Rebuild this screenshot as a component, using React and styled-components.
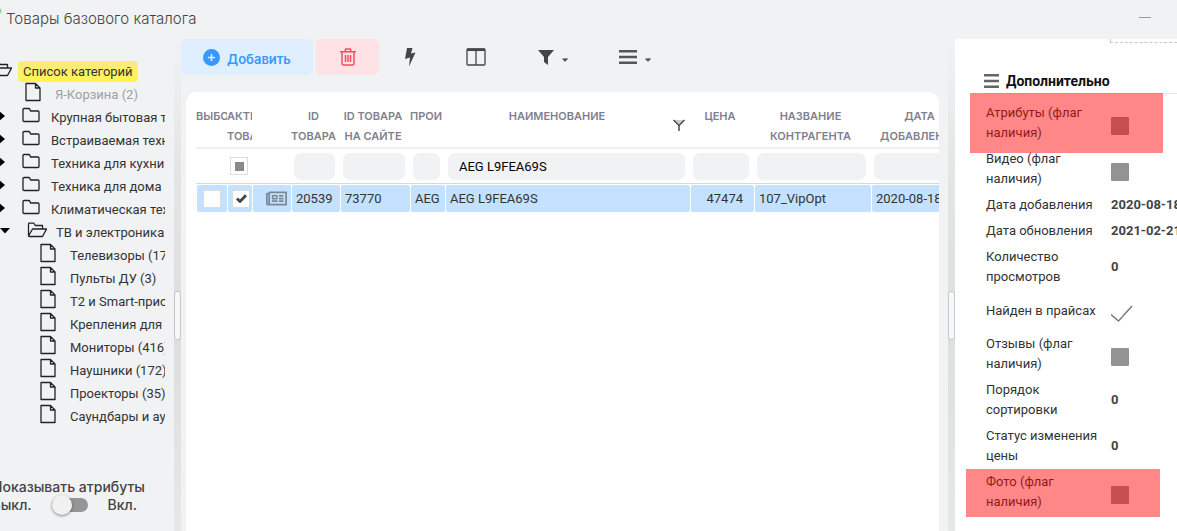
import React, { useEffect, useRef, useState } from 'react'
import styled, { createGlobalStyle } from 'styled-components'
import { FaCirclePlus, FaCaretDown } from 'react-icons/fa6'
import { FaRegNewspaper } from 'react-icons/fa'

const narrow = `Roboto, sans-serif`;
const wide = `Inter, sans-serif`;

const GlobalStyle = createGlobalStyle`
  * {
    box-sizing: border-box;
  }
  body {
    margin: 0;
    background: #f1f2f4;
    color: #333;
    font-family: ${narrow};
    font-size: 13px;
    overflow: hidden;
  }
  button, input {
    font: inherit;
  }
`;

const Window = styled.div`
  display: flex;
  flex-direction: column;
  height: 100vh;
`;

const TitleBar = styled.header`
  display: flex;
  justify-content: space-between;
  align-items: center;
  flex: none;
  height: 39px;
  padding: 0 26px 4px 6px;
  background: radial-gradient(circle at -2px 11px, #6abf3a 2px, transparent 4px);
  h1 {
    margin: 2px 0 0;
    font-family: ${wide};
    font-size: 15px;
    font-weight: 300;
    color: #444;
  }
`;

const MinimizeButton = styled.button`
  width: 12px;
  height: 12px;
  padding: 0;
  border: none;
  background: linear-gradient(#999, #999) center / 12px 1px no-repeat;
  cursor: pointer;
`;

const Body = styled.div`
  display: flex;
  flex: 1;
  min-height: 0;
`;

const Sidebar = styled.aside`
  display: flex;
  flex-direction: column;
  flex: none;
  width: 174px;
  padding-top: 21px;
  overflow: hidden;
`;

const Tree = styled.ul`
  list-style: none;
  width: 165px;
  margin: 0;
  padding: 0;
  overflow: hidden;
`;

const TreeRow = styled.li`
  display: flex;
  align-items: center;
  height: 23px;
  white-space: nowrap;
  color: ${(props) => (props.$muted ? "#a0a0a0" : "#333")};
`;

const TreeArrow = styled.svg`
  flex: none;
  width: 10px;
  height: 12px;
  margin: 0 17px 4px ${(props) => (props.$open ? 0 : -5)}px;
`;

const TreeIcon = styled.svg`
  flex: none;
  width: 20px;
  height: 20px;
  margin: 0 ${(props) => props.$gap}px 6px ${(props) => props.$indent}px;
  fill: none;
  stroke: #222;
  stroke-width: 1.3;
  stroke-linejoin: round;
`;

const RootLabel = styled.span`
  height: 21px;
  padding: 0 5px;
  border-radius: 4px;
  background: linear-gradient(#fbe983, #fff64d);
  line-height: 21px;
`;

const AttributeSwitch = styled.div`
  display: flex;
  flex-direction: column;
  align-items: flex-end;
  width: 145px;
  margin-top: 50px;
  font-family: ${wide};
  font-size: 14px;
  font-weight: 500;
  line-height: 18px;
  white-space: nowrap;
  color: #444;
`;

const SwitchRow = styled.label`
  display: flex;
  align-items: center;
  justify-content: flex-end;
  padding-right: 8px;
`;

const Switch = styled.input`
  appearance: none;
  display: flex;
  align-items: center;
  width: 36px;
  height: 14px;
  margin: 0 20px;
  border-radius: 7px;
  background: #959595;
  cursor: pointer;
  &::before {
    content: "";
    width: 20px;
    height: 20px;
    border-radius: 50%;
    background: #f1f1f1;
    box-shadow: 0 1px 3px rgba(0, 0, 0, 0.45);
  }
  &:checked {
    justify-content: flex-end;
  }
`;

const Splitter = styled.div`
  flex: none;
  width: 7px;
  padding-top: 252px;
  background: linear-gradient(#f1f2f4, #e4e6e6 25%, #dddfdf 60%, #e6e8e7);
  cursor: col-resize;
  &::before {
    content: "";
    display: block;
    height: 47px;
    border: 1px solid #c4c6c8;
    border-radius: 3px;
    background: #f6f7f8;
  }
`;

const Main = styled.main`
  display: flex;
  flex-direction: column;
  flex: 1;
  min-width: 0;
`;

const Toolbar = styled.div`
  display: flex;
  gap: 3px;
  height: 36px;
  margin-bottom: 17px;
`;

const ToolButton = styled.button`
  display: flex;
  align-items: center;
  justify-content: center;
  gap: 7px;
  width: ${(props) => props.$width}px;
  padding: 0;
  border: none;
  border-radius: 5px;
  background: ${(props) => props.$background || "transparent"};
  color: ${(props) => props.$color || "#444"};
  font-family: ${wide};
  font-size: 13px;
  font-weight: 600;
  cursor: pointer;
  span {
    padding-top: 4px;
  }
`;

const Caret = styled(FaCaretDown)`
  margin-top: 4px;
  width: 8px;
  height: 9px;
  color: #555;
`;

const GridPanel = styled.section`
  flex: 1;
  margin: 0 9px 0 5px;
  padding: 14px 0 0 10px;
  border-radius: 10px 10px 0 0;
  background: #fff;
  overflow: hidden;
`;

const Table = styled.table`
  width: 776px;
  table-layout: fixed;
  border-collapse: separate;
  border-spacing: 0;
`;

const HeadCell = styled.th`
  height: 43px;
  padding: 0 ${(props) => (props.$align ? 0 : 4)}px 0 0;
  border-bottom: 2px solid #efefef;
  vertical-align: top;
  text-align: ${(props) => props.$align || "center"};
  font-family: ${wide};
  font-size: 11px;
  font-weight: 600;
  line-height: 20px;
  color: #7f7f8d;
  white-space: nowrap;
  overflow: hidden;
`;

const HeadWithFilter = styled.div`
  display: flex;
  span {
    flex: 1;
  }
  svg {
    margin: 13px 1px 0 4px;
  }
`;

const FilterCell = styled.td`
  height: 35px;
  padding: 0 5px 0 3px;
  border-bottom: 1px solid #d8d8d8;
`;

const FilterInput = styled.input`
  display: block;
  width: 100%;
  height: 27px;
  padding: 0 11px;
  border: none;
  border-radius: 7px;
  background: #f1f2f3;
  color: #000;
  outline: none;
`;

const Cell = styled.td`
  height: 29px;
  padding: 0 ${(props) => (props.$number ? 11 : 4)}px 0 4px;
  border: solid transparent;
  border-width: 1px 0 1px 1px;
  border-radius: 3px;
  background: #c4e1ff;
  background-clip: padding-box;
  text-align: ${(props) => props.$align || "left"};
  white-space: nowrap;
  overflow: hidden;
`;

const NewsIcon = styled(FaRegNewspaper)`
  display: inline-block;
  vertical-align: middle;
  color: #7d8896;
`;

const Tick = styled.span`
  display: grid;
  width: 18px;
  height: 18px;
  margin: 0 auto;
  border: 1px solid #dcdcdc;
  background: #fff;
  input, svg {
    grid-area: 1 / 1;
    place-self: center;
    margin: 0;
  }
  input {
    appearance: none;
    width: 16px;
    height: 16px;
  }
  input:indeterminate {
    width: 9px;
    height: 9px;
    background: #8a8a8a;
  }
  svg {
    pointer-events: none;
  }
`;

const Details = styled.aside`
  flex: none;
  width: 222px;
  background: #fff;
  overflow: hidden;
`;

const PhotoFrame = styled.div`
  height: 4px;
  margin-left: 155px;
  border: dashed #c8c8c8;
  border-width: 0 0 1px 1px;
`;

const DetailsTitle = styled.h2`
  display: flex;
  align-items: center;
  gap: 7px;
  height: 26px;
  margin: 25px 0 6px 29px;
  border-bottom: 1px solid #e8e8e8;
  font-size: 14px;
  font-weight: 700;
  color: #111;
`;

const Field = styled.div`
  position: relative;
  display: grid;
  grid-template-columns: 113px 1fr;
  column-gap: 12px;
  align-items: center;
  min-height: ${(props) => (props.$tall ? 41 : 26)}px;
  padding: 3px 0 3px 31px;
  line-height: 20px;
  white-space: nowrap;
  label {
    white-space: pre-line;
  }
  output {
    font-weight: 700;
    color: #444;
  }
  svg {
    margin-top: 6px;
  }
`;

const FlagBox = styled.input`
  appearance: none;
  width: 18px;
  height: 18px;
  margin: 6px 0 0;
  border-radius: 1px;
  background: #939393;
`;

const Marker = styled.div`
  position: absolute;
  z-index: 1;
  inset: ${(props) => props.$inset};
  background: rgba(255, 0, 0, 0.47);
  pointer-events: none;
`;

const folderPath = "M2 15.5V4.5q0-1 1-1h4.500q1 0 1.500 1l.5 1.500h7.500q1 0 1 1v8.500q0 1-1 1H3q-1 0-1-1z";
const openFolderPath = "M1.500 16V4q0-.8.8-.8h4.400l1.600 2.300h7.200v3.500M1.500 16l4-7h14l-4 7.500h-13q-1 0-1-.5zM5.500 9h10";
const filePath = "M3 1.500h9.500l4.500 4.500v12.500H3zM12.500 1.500v4.500H17";

const tree = [
  { type: "file", text: "Я-Корзина (2)", indent: 23, muted: true },
  { type: "folder", text: "Крупная бытовая техника" },
  { type: "folder", text: "Встраиваемая техника" },
  { type: "folder", text: "Техника для кухни" },
  { type: "folder", text: "Техника для дома" },
  { type: "folder", text: "Климатическая техника" },
  { type: "open", text: "ТВ и электроника" },
  { type: "file", text: "Телевизоры (174)" },
  { type: "file", text: "Пульты ДУ (3)" },
  { type: "file", text: "Т2 и Smart-приставки" },
  { type: "file", text: "Крепления для ТВ" },
  { type: "file", text: "Мониторы (416)" },
  { type: "file", text: "Наушники (172)" },
  { type: "file", text: "Проекторы (35)" },
  { type: "file", text: "Саундбары и аудио" },
];

const fields = [
  { label: "Атрибуты (флаг\nналичия)", flag: true, marker: "-7px 14px -7px 15px" },
  { label: "Видео (флаг\nналичия)", flag: true },
  { label: "Дата добавления", value: "2020-08-18" },
  { label: "Дата обновления", value: "2021-02-21" },
  { label: "Количество\nпросмотров", value: "0" },
  { label: "Найден в прайсах", found: true },
  { label: "Отзывы (флаг\nналичия)", flag: true },
  { label: "Порядок\nсортировки", value: "0" },
  { label: "Статус изменения\nцены", value: "0" },
  { label: "Фото (флаг\nналичия)", flag: true, marker: "0 17px -2px 11px" },
];

const columnWidths = [31, 25, 39, 49, 70, 35, 245, 64, 117, 101];

function TreeItem({ item }) {
  if (item.type === "file") {
    return (
      <TreeRow $muted={item.muted}>
        <TreeIcon $indent={item.indent || 38} $gap={12} viewBox="0 0 20 20">
          <path d={filePath} />
        </TreeIcon>
        {item.text}
      </TreeRow>
    );
  }
  const open = item.type === "open";
  return (
    <TreeRow>
      <TreeArrow $open={open} viewBox="0 0 10 12">
        <path d={open ? "M0 3h10L5 8.500z" : "M3 0l7 6-7 6z"} />
      </TreeArrow>
      <TreeIcon $indent={open ? 0 : -1} $gap={open ? 9 : 10} viewBox="0 0 20 20">
        <path d={open ? openFolderPath : folderPath} />
      </TreeIcon>
      {item.text}
    </TreeRow>
  );
}

function TickBox({ label, value, onChange }) {
  const ref = useRef(null);
  useEffect(() => {
    ref.current.indeterminate = value === null;
  }, [value]);
  return (
    <Tick>
      <input
        ref={ref}
        type="checkbox"
        aria-label={label}
        checked={!!value}
        onChange={(e) => onChange(e.target.checked)}
      />
      {value && (
        <svg width="11" height="9" viewBox="0 0 11 9" fill="none" stroke="#444" strokeWidth="2.800">
          <path d="M1 4.500l3 3L10 1.200" />
        </svg>
      )}
    </Tick>
  );
}

function MenuIcon({ width, color }) {
  return (
    <svg width={width} height="14" viewBox="0 0 18 14" preserveAspectRatio="none" fill={color}>
      <path d="M0 0h18v2.500H0zM0 5.750h18v2.500H0zM0 11.500h18V14H0z" />
    </svg>
  );
}

export default function App() {
  const [name, setName] = useState("AEG L9FEA69S");
  const [selected, setSelected] = useState(false);
  const [active, setActive] = useState(true);
  const [activeFilter, setActiveFilter] = useState(null);
  const [showAttributes, setShowAttributes] = useState(false);

  return (
    <Window>
      <GlobalStyle />
      <TitleBar>
        <h1>Товары базового каталога</h1>
        <MinimizeButton aria-label="Свернуть" />
      </TitleBar>
      <Body>
        <Sidebar>
          <Tree>
            <TreeRow>
              <TreeIcon $indent={-8} $gap={6} viewBox="0 0 20 20">
                <path d={openFolderPath} />
              </TreeIcon>
              <RootLabel>Список категорий</RootLabel>
            </TreeRow>
            {tree.map((item) => (
              <TreeItem key={item.text} item={item} />
            ))}
          </Tree>
          <AttributeSwitch>
            <span>Показывать атрибуты</span>
            <SwitchRow>
              Выкл.
              <Switch
                type="checkbox"
                role="switch"
                checked={showAttributes}
                onChange={(e) => setShowAttributes(e.target.checked)}
              />
              Вкл.
            </SwitchRow>
          </AttributeSwitch>
        </Sidebar>
        <Splitter />
        <Main>
          <Toolbar>
            <ToolButton $width={132} $background="#e0efff" $color="#3699ff">
              <FaCirclePlus size={17} />
              <span>Добавить</span>
            </ToolButton>
            <ToolButton $width={63} $background="#ffe2e5" $color="#f64e60" aria-label="Удалить">
              <svg width="16" height="18" viewBox="0 0 16 18" fill="none" stroke="currentColor" strokeWidth="1.500">
                <path d="M0 3.750h16M2 4v11.500q0 1.500 1.500 1.500h9q1.500 0 1.500-1.500V4M5 3.500l.7-2.500h4.600l.7 2.500M5.500 7v7M8 7v7M10.500 7v7" />
              </svg>
            </ToolButton>
            <ToolButton $width={56} aria-label="Быстрые действия">
              <svg width="12" height="20" viewBox="0 0 12 20" fill="currentColor">
                <path d="M3 1h5.500L7 6.500 11.500 5.500 5 19.500 6 10.500 1 12z" />
              </svg>
            </ToolButton>
            <ToolButton $width={70} aria-label="Колонки">
              <svg width="20" height="18" viewBox="0 0 20 18" fill="none" stroke="currentColor" strokeWidth="1.300">
                <rect x="1" y="1" width="18" height="16" rx="1" />
                <path d="M1 1.800h18" strokeWidth="2.500" />
                <path d="M10 2v15" />
              </svg>
            </ToolButton>
            <ToolButton $width={78} aria-label="Фильтр">
              <svg width="16" height="16" viewBox="0 0 16 16" fill="currentColor">
                <path d="M0 1h16L10 8v8l-4-3V8z" />
              </svg>
              <Caret />
            </ToolButton>
            <ToolButton $width={80} aria-label="Меню">
              <MenuIcon width="18" color="#555" />
              <Caret />
            </ToolButton>
          </Toolbar>
          <GridPanel>
            <Table>
              <colgroup>
                {columnWidths.map((width, i) => (
                  <col key={i} width={width} />
                ))}
              </colgroup>
              <thead>
                <tr>
                  <HeadCell $align="left">ВЫБОР</HeadCell>
                  <HeadCell $align="left">АКТИВНЫЙ<br />ТОВАР</HeadCell>
                  <HeadCell />
                  <HeadCell>ID<br />ТОВАРА</HeadCell>
                  <HeadCell>ID ТОВАРА<br />НА САЙТЕ</HeadCell>
                  <HeadCell $align="left">ПРОИ</HeadCell>
                  <HeadCell>
                    <HeadWithFilter>
                      <span>НАИМЕНОВАНИЕ</span>
                      <svg width="12" height="12" viewBox="0 0 12 12" fill="none" stroke="#444" strokeWidth="1.300">
                        <path d="M.5 1h11L7 6v5.500H5V6z" fill="#ccc" stroke="none" />
                        <path d="M.5 1L6 6.500V12M11.500 1L6 6.500" />
                      </svg>
                    </HeadWithFilter>
                  </HeadCell>
                  <HeadCell>ЦЕНА</HeadCell>
                  <HeadCell>НАЗВАНИЕ<br />КОНТРАГЕНТА</HeadCell>
                  <HeadCell>ДАТА<br />ДОБАВЛЕНИЯ</HeadCell>
                </tr>
              </thead>
              <tbody>
                <tr>
                  <FilterCell />
                  <FilterCell>
                    <TickBox label="Активный товар: фильтр" value={activeFilter} onChange={setActiveFilter} />
                  </FilterCell>
                  <FilterCell />
                  <FilterCell><FilterInput aria-label="ID товара" /></FilterCell>
                  <FilterCell><FilterInput aria-label="ID товара на сайте" /></FilterCell>
                  <FilterCell><FilterInput aria-label="Производитель" /></FilterCell>
                  <FilterCell>
                    <FilterInput aria-label="Наименование" value={name} onChange={(e) => setName(e.target.value)} />
                  </FilterCell>
                  <FilterCell><FilterInput aria-label="Цена" /></FilterCell>
                  <FilterCell><FilterInput aria-label="Название контрагента" /></FilterCell>
                  <FilterCell><FilterInput aria-label="Дата добавления" /></FilterCell>
                </tr>
                <tr>
                  <Cell><TickBox label="Выбор" value={selected} onChange={setSelected} /></Cell>
                  <Cell><TickBox label="Активный товар" value={active} onChange={setActive} /></Cell>
                  <Cell $align="right"><NewsIcon size={21} /></Cell>
                  <Cell>20539</Cell>
                  <Cell>73770</Cell>
                  <Cell>AEG</Cell>
                  <Cell>AEG L9FEA69S</Cell>
                  <Cell $align="right" $number>47474</Cell>
                  <Cell>107_VipOpt</Cell>
                  <Cell>2020-08-18</Cell>
                </tr>
              </tbody>
            </Table>
          </GridPanel>
        </Main>
        <Splitter />
        <Details>
          <PhotoFrame />
          <DetailsTitle>
            <MenuIcon width="15" color="#666" />
            Дополнительно
          </DetailsTitle>
          {fields.map((field, i) => (
            <Field key={field.label} $tall={field.found}>
              <label htmlFor={"field" + i}>{field.label}</label>
              {field.flag && <FlagBox id={"field" + i} type="checkbox" />}
              {field.value && <output id={"field" + i}>{field.value}</output>}
              {field.found && (
                <svg width="22" height="18" viewBox="0 0 22 18" fill="none" stroke="#777" strokeWidth="1.400">
                  <path d="M0 9.500l7.500 6.500L21 1" />
                </svg>
              )}
              {field.marker && <Marker $inset={field.marker} />}
            </Field>
          ))}
        </Details>
      </Body>
    </Window>
  )
}
